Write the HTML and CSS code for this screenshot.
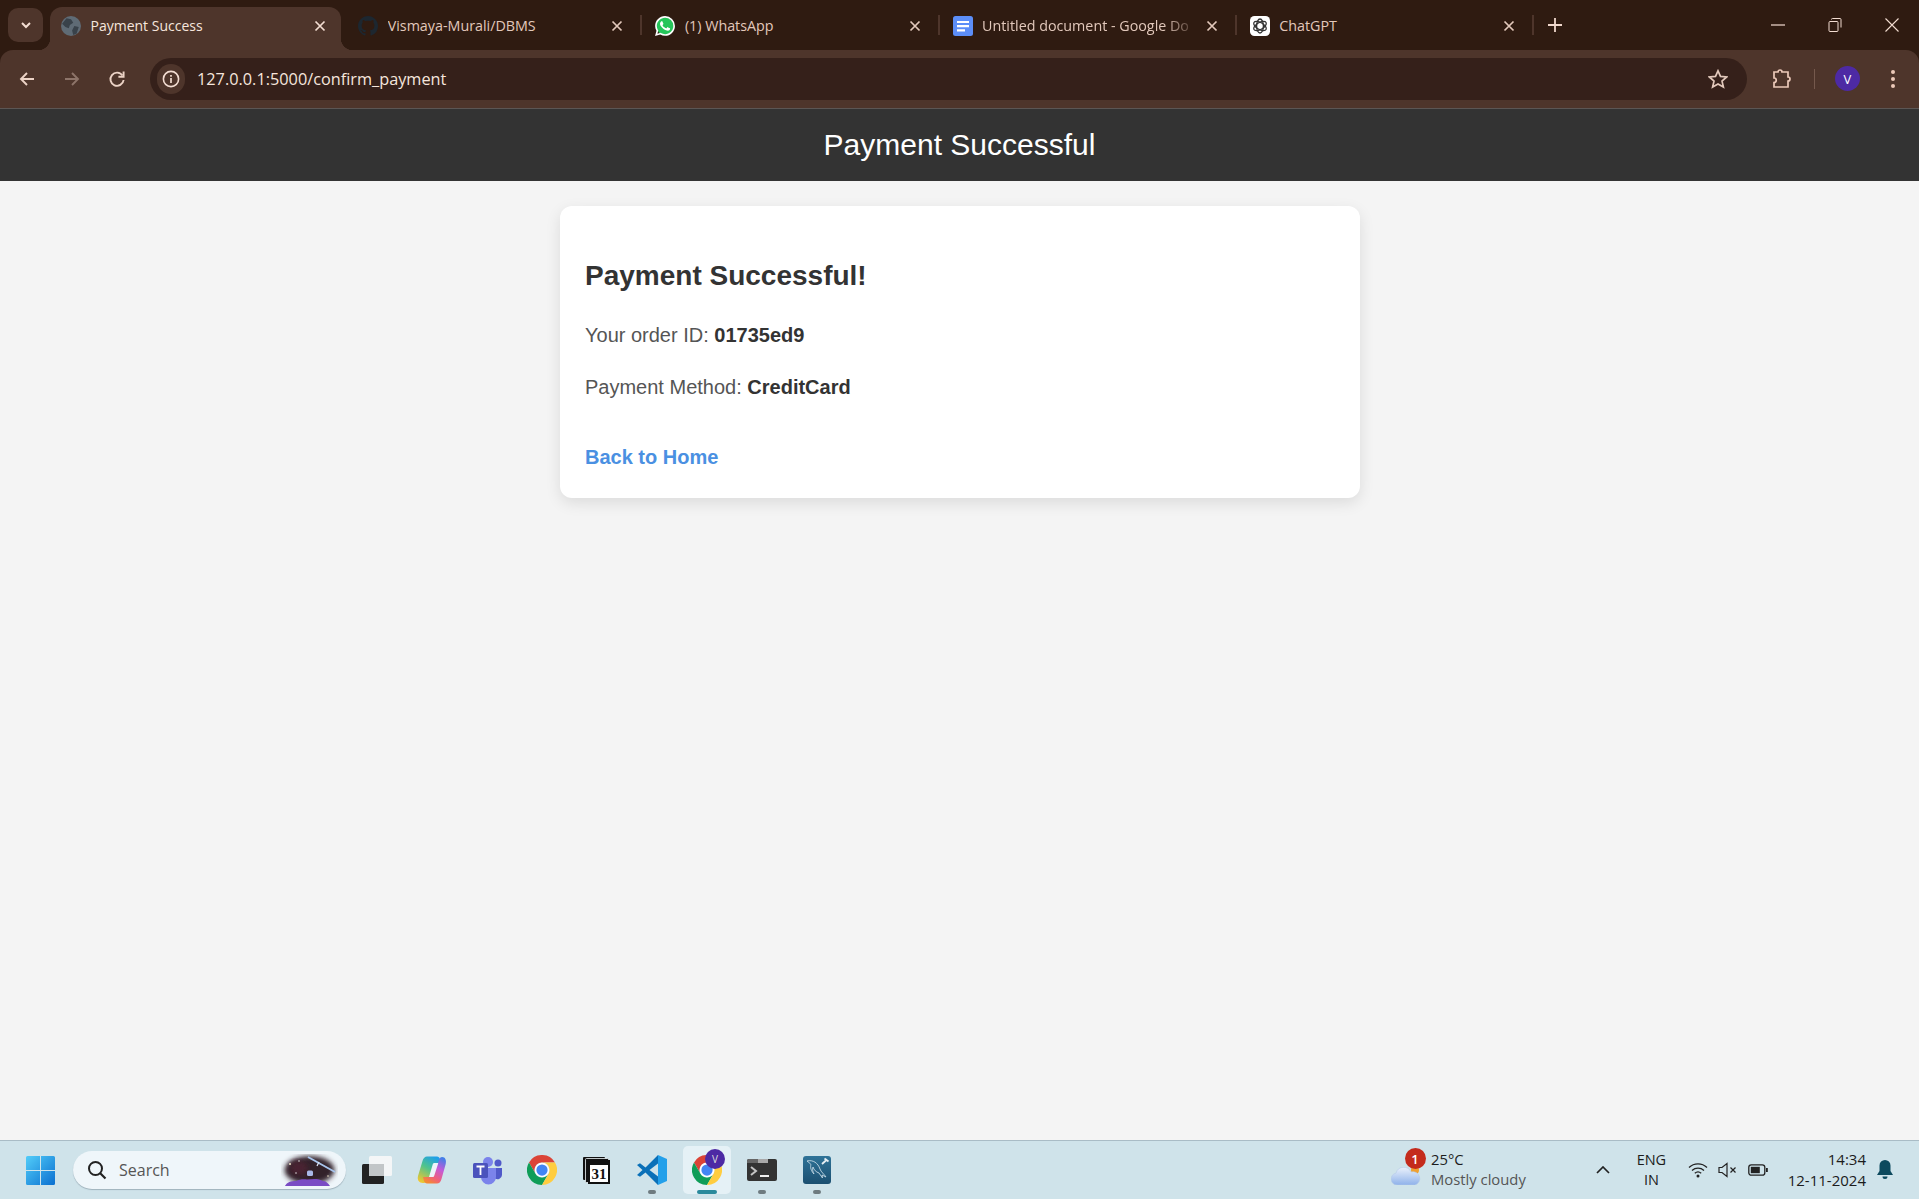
FILE: index.html
```html
<!DOCTYPE html>
<html lang="en">
<head>
    <meta charset="UTF-8">
    <meta name="viewport" content="width=device-width, initial-scale=1.0">
    <title>Payment Success</title>
    <link rel="stylesheet" href="styles.css">
</head>
<body>
    <div class="browser">
        <div class="tabstrip">
            <button class="tab-search">
                <svg width="14" height="14" viewBox="0 0 14 14"><path d="M3 5l4 4 4-4" fill="none" stroke="#f3ddd2" stroke-width="2"/></svg>
            </button>
            <div class="tab active">
                <svg class="favicon" viewBox="0 0 18 18"><circle cx="9" cy="9" r="9" fill="#5f6b75"/><path d="M5 2l4 1 2 3-3 2-1 3-3-1-3-3zM12 9l4 1-2 6-3 1-1-4z" fill="#39424a"/></svg>
                <span class="tab-title">Payment Success</span>
                <svg class="tab-close" viewBox="0 0 12 12"><path d="M1.5 1.5l9 9M10.5 1.5l-9 9" stroke="#f3ddd2" stroke-width="1.7"/></svg>
            </div>
            <div class="tab">
                <svg class="favicon" viewBox="0 0 16 16"><path fill="#1d2730" d="M8 0C3.58 0 0 3.58 0 8c0 3.54 2.29 6.53 5.47 7.59.4.07.55-.17.55-.38 0-.19-.01-.82-.01-1.49-2.01.37-2.53-.49-2.69-.94-.09-.23-.48-.94-.82-1.13-.28-.15-.68-.52-.01-.53.63-.01 1.08.58 1.23.82.72 1.21 1.87.87 2.33.66.07-.52.28-.87.51-1.07-1.78-.2-3.64-.89-3.64-3.95 0-.87.31-1.59.82-2.15-.08-.2-.36-1.02.08-2.12 0 0 .67-.21 2.2.82.64-.18 1.32-.27 2-.27.68 0 1.36.09 2 .27 1.53-1.04 2.2-.82 2.2-.82.44 1.1.16 1.92.08 2.12.51.56.82 1.27.82 2.15 0 3.07-1.87 3.75-3.65 3.95.29.25.54.73.54 1.48 0 1.07-.01 1.93-.01 2.2 0 .21.15.46.55.38A8.013 8.013 0 0016 8c0-4.42-3.58-8-8-8z"/></svg>
                <span class="tab-title">Vismaya-Murali/DBMS</span>
                <svg class="tab-close" viewBox="0 0 12 12"><path d="M1.5 1.5l9 9M10.5 1.5l-9 9" stroke="#e2c8bb" stroke-width="1.7"/></svg>
            </div>
            <i class="tab-sep"></i>
            <div class="tab">
                <svg class="favicon" viewBox="0 0 24 24"><circle cx="12" cy="12" r="10.5" fill="#25c55a"/><path fill="#fff" d="M17.472 14.382c-.297-.149-1.758-.867-2.03-.967-.273-.099-.471-.148-.67.15-.197.297-.767.966-.94 1.164-.173.199-.347.223-.644.075-.297-.15-1.255-.463-2.39-1.475-.883-.788-1.48-1.761-1.653-2.059-.173-.297-.018-.458.13-.606.134-.133.298-.347.446-.52.149-.174.198-.298.298-.497.099-.198.05-.371-.025-.52-.075-.149-.669-1.612-.916-2.207-.242-.579-.487-.5-.669-.51-.173-.008-.371-.01-.57-.01-.198 0-.52.074-.792.372-.272.297-1.04 1.016-1.04 2.479 0 1.462 1.065 2.875 1.213 3.074.149.198 2.096 3.2 5.077 4.487.709.306 1.262.489 1.694.625.712.227 1.36.195 1.871.118.571-.085 1.758-.719 2.006-1.413.248-.694.248-1.289.173-1.413-.074-.124-.272-.198-.57-.347m-5.421 7.403h-.004a9.87 9.87 0 01-5.031-1.378l-.361-.214-3.741.982.998-3.648-.235-.374a9.86 9.86 0 01-1.51-5.26c.001-5.45 4.436-9.884 9.888-9.884 2.64 0 5.122 1.03 6.988 2.898a9.825 9.825 0 012.893 6.994c-.003 5.45-4.437 9.884-9.885 9.884m8.413-18.297A11.815 11.815 0 0012.05 0C5.495 0 .16 5.335.157 11.892c0 2.096.547 4.142 1.588 5.945L.057 24l6.305-1.654a11.882 11.882 0 005.683 1.448h.005c6.554 0 11.89-5.335 11.893-11.893a11.821 11.821 0 00-3.48-8.413z"/></svg>
                <span class="tab-title">(1) WhatsApp</span>
                <svg class="tab-close" viewBox="0 0 12 12"><path d="M1.5 1.5l9 9M10.5 1.5l-9 9" stroke="#e2c8bb" stroke-width="1.7"/></svg>
            </div>
            <i class="tab-sep"></i>
            <div class="tab">
                <svg class="favicon" viewBox="0 0 20 20"><rect width="20" height="20" rx="2.5" fill="#5c8ef8"/><path d="M4 6h12M4 10.200h12M4 14.400h8" stroke="#fff" stroke-width="2.200"/></svg>
                <span class="tab-title fade">Untitled document - Google Do</span>
                <svg class="tab-close" viewBox="0 0 12 12"><path d="M1.5 1.5l9 9M10.5 1.5l-9 9" stroke="#e2c8bb" stroke-width="1.7"/></svg>
            </div>
            <i class="tab-sep"></i>
            <div class="tab">
                <svg class="favicon" viewBox="0 0 20 20"><rect width="20" height="20" rx="4.500" fill="#fff"/><g fill="none" stroke="#333" stroke-width="1.300"><ellipse cx="10" cy="10" rx="3.400" ry="7"/><ellipse cx="10" cy="10" rx="3.400" ry="7" transform="rotate(60 10 10)"/><ellipse cx="10" cy="10" rx="3.400" ry="7" transform="rotate(120 10 10)"/></g></svg>
                <span class="tab-title">ChatGPT</span>
                <svg class="tab-close" viewBox="0 0 12 12"><path d="M1.5 1.5l9 9M10.5 1.5l-9 9" stroke="#e2c8bb" stroke-width="1.7"/></svg>
            </div>
            <i class="tab-sep"></i>
            <svg class="new-tab" viewBox="0 0 14 14"><path d="M7 0v14M0 7h14" stroke="#f0d8cc" stroke-width="1.8"/></svg>
            <div class="window-controls">
                <svg viewBox="0 0 14 14"><path d="M0 7h14" stroke="#f3ddd2" stroke-width="1.2"/></svg>
                <svg viewBox="0 0 14 14"><path d="M1 4.500a1 1 0 0 1 1-1h7a1 1 0 0 1 1 1v8a1 1 0 0 1-1 1H2a1 1 0 0 1-1-1zM3.500 1.500a1 1 0 0 1 1-1h7.500a1 1 0 0 1 1 1v8" fill="none" stroke="#f3ddd2"/></svg>
                <svg viewBox="0 0 14 14"><path d="M.5.5l13 13M13.500.5l-13 13" stroke="#f3ddd2" stroke-width="1.100"/></svg>
            </div>
        </div>

        <div class="toolbar">
            <svg class="tool first" viewBox="0 0 18 18"><path d="M16 9H3M9 3L3 9l6 6" fill="none" stroke="#ecd3c6" stroke-width="1.900"/></svg>
            <svg class="tool" viewBox="0 0 18 18"><path d="M2 9h13M9 3l6 6-6 6" fill="none" stroke="#8d7469" stroke-width="1.900"/></svg>
            <svg class="tool" viewBox="0 0 18 18"><path d="M14.500 5.500A6.600 6.600 0 1 0 15.600 10" fill="none" stroke="#ecd3c6" stroke-width="1.900"/><path d="M15.600 1.500v5.200h-5.200" fill="none" stroke="#ecd3c6" stroke-width="1.900"/></svg>
            <div class="omnibox">
                <span class="site-info">
                    <svg width="18" height="18" viewBox="0 0 18 18"><circle cx="9" cy="9" r="7.600" fill="none" stroke="#f3ddd2" stroke-width="1.600"/><path d="M9 8v5M9 5v1.800" stroke="#f3ddd2" stroke-width="1.700"/></svg>
                </span>
                <span class="url">127.0.0.1:5000/confirm_payment</span>
                <svg class="star" viewBox="0 0 20 20"><path d="M10 1.800l2.500 5.600 6.100.6-4.600 4.100 1.400 6L10 15l-5.400 3.100 1.400-6L1.400 8l6.100-.6z" fill="none" stroke="#e2c8bb" stroke-width="1.700"/></svg>
            </div>
            <svg class="extensions" viewBox="0 0 20 20"><path d="M3 2.500h4a2 2 0 0 1 4 0h6v5a2 2 0 0 1 0 4v6H3v-4.500a2.200 2.200 0 0 0 0-4.500z" transform="translate(0 .5)" fill="none" stroke="#ecc9b9" stroke-width="1.700"/></svg>
            <i class="toolbar-sep"></i>
            <span class="avatar">V</span>
            <svg class="menu-dots" viewBox="0 0 6 20"><circle cx="3" cy="3" r="2" fill="#ecc9b9"/><circle cx="3" cy="10" r="2" fill="#ecc9b9"/><circle cx="3" cy="17" r="2" fill="#ecc9b9"/></svg>
        </div>
    </div>

    <header class="page-header">
        <h1>Payment Successful</h1>
    </header>

    <main class="page-main">
        <div class="card">
            <h2>Payment Successful!</h2>
            <p>Your order ID: <strong>01735ed9</strong></p>
            <p>Payment Method: <strong>CreditCard</strong></p>
            <a class="home-link" href="#">Back to Home</a>
        </div>
    </main>

    <footer class="taskbar">
        <svg class="start" viewBox="0 0 29 29">
            <defs><linearGradient id="win" x1="0" y1="0" x2="1" y2="1"><stop offset="0" stop-color="#52cdf9"/><stop offset="1" stop-color="#0a6fd0"/></linearGradient></defs>
            <path d="M0 1.500A1.500 1.500 0 0 1 1.500 0H14v14H0zM15 0h12.500A1.500 1.500 0 0 1 29 1.500V14H15zM0 15h14v14H1.500A1.500 1.500 0 0 1 0 27.500zM15 15h14v12.500a1.500 1.500 0 0 1-1.500 1.500H15z" fill="url(#win)"/>
        </svg>
        <div class="search">
            <svg width="20" height="20" viewBox="0 0 20 20"><circle cx="8.500" cy="8.500" r="6.500" fill="none" stroke="#222" stroke-width="2"/><path d="M13 13l5.500 5.500" stroke="#222" stroke-width="2.200"/></svg>
            <span class="search-label">Search</span>
            <svg class="search-art" viewBox="0 0 57 32">
                <defs>
                    <filter id="soft" x="-20%" y="-20%" width="140%" height="140%"><feGaussianBlur stdDeviation="2.500"/></filter>
                    <clipPath id="artclip"><rect width="57" height="32"/></clipPath>
                </defs>
                <g clip-path="url(#artclip)">
                    <ellipse cx="28.500" cy="16" rx="25" ry="14" fill="#33202a" filter="url(#soft)"/>
                    <ellipse cx="18" cy="14" rx="9" ry="7" fill="#4a2230" filter="url(#soft)"/>
                    <path d="M27 3l27 15" stroke="#a8c4ec" stroke-width="2"/>
                    <path d="M38 8l-2 4" stroke="#dbe6f7" stroke-width="1.200"/>
                    <rect x="26" y="16.500" width="6" height="5.500" rx="1.500" fill="#a9b9e8"/>
                    <circle cx="9" cy="10" r="1" fill="#f0e6c8"/>
                    <circle cx="18" cy="7" r=".7" fill="#fff"/>
                    <circle cx="47" cy="22" r=".8" fill="#f0e6c8"/>
                    <circle cx="15" cy="19" r=".7" fill="#fff"/>
                    <path d="M4 32c2-4 6-5 11-5 3-1.500 7-2 11-1.500 6-1 13-1 16 1.500 3 0 5 2 7 5z" fill="#7a4cc4"/>
                </g>
            </svg>
        </div>
        <div class="task-icons">
            <span class="task">
                <svg viewBox="0 0 30 28"><rect x="7" y="0" width="23" height="20" rx="1.500" fill="#f4f6f7"/><rect y="8" width="22" height="20" rx="1.500" fill="#222"/><rect x="7" y="8" width="15" height="12" fill="#c2c6c8"/></svg>
            </span>
            <span class="task">
                <svg viewBox="0 0 30 30">
                    <defs>
                        <linearGradient id="cop1" x1="0.700" y1="0" x2="0.200" y2="1"><stop offset="0" stop-color="#1f9fe8"/><stop offset=".45" stop-color="#4fc48c"/><stop offset="1" stop-color="#f4c72e"/></linearGradient>
                        <linearGradient id="cop2" x1="0.800" y1="0" x2="0.300" y2="1"><stop offset="0" stop-color="#3f7fe8"/><stop offset=".4" stop-color="#c45ad8"/><stop offset=".75" stop-color="#f0607a"/><stop offset="1" stop-color="#f58a32"/></linearGradient>
                    </defs>
                    <path d="M12 8h10l-4 14H8z" fill="#eef3fa"/>
                    <path d="M10 1.500H20c1.500 0 2.500 1 3 2.500l1 4H17.500c-1 0-1.500.5-1.800 1.500L12 22c-1 3.500-3 6-6 6C2 28 0 25 1 21L5.500 6C6.300 3 8 1.500 10 1.500z" fill="url(#cop1)"/>
                    <path d="M20 28.500H10c-1.500 0-2.500-1-3-2.500l-1-4h9.500c1 0 1.500-.5 1.800-1.500L21 9c.8-3.500 1.500-7 4-7 3.500 0 4.500 3.500 3.700 7L24.500 24c-.8 3-2.500 4.500-4.500 4.500z" fill="url(#cop2)"/>
                </svg>
            </span>
            <span class="task">
                <svg viewBox="0 0 30 30"><circle cx="16" cy="7" r="5" fill="#7b83eb"/><circle cx="26" cy="8" r="3.500" fill="#5059c9"/><path d="M23 13h7v7a4.500 4.500 0 0 1-7 3.500z" fill="#5059c9"/><path d="M9 13h15v9a7.500 7.500 0 0 1-15 0z" fill="#7b83eb"/><rect x="1" y="8" width="15" height="15" rx="1.500" fill="#4b53bc"/><path d="M4.500 11.500h8M8.500 11.500V20" stroke="#fff" stroke-width="1.800"/></svg>
            </span>
            <span class="task">
                <svg viewBox="0 0 48 48"><path fill="#db4437" d="M24 12h20.800A24 24 0 0 0 3.200 12l10.400 18A12 12 0 0 1 24 12z"/><path fill="#0f9d58" d="M13.600 30L3.200 12A24 24 0 0 0 24 48l10.400-18a12 12 0 0 1-20.800 0z"/><path fill="#ffcd40" d="M34.400 30L24 48a24 24 0 0 0 20.800-36H24a12 12 0 0 1 10.400 18z"/><circle cx="24" cy="24" r="11.500" fill="#fff"/><circle cx="24" cy="24" r="9" fill="#4285f4"/></svg>
            </span>
            <span class="task">
                <svg viewBox="0 0 30 30"><rect x="1" y="2" width="22" height="23" rx="1" fill="#111"/><rect x="3.500" y="3.500" width="23" height="24" rx="1" fill="#111" stroke="#eef5f8" stroke-width=".8"/><rect x="6" y="5" width="22" height="24" fill="#111"/><rect x="8" y="10" width="18" height="17" fill="#fff"/><text class="cal-date" x="17" y="24">31</text></svg>
            </span>
            <span class="task has-pip">
                <svg viewBox="0 0 30 30"><path d="M21 0l9 4v22l-9 4z" fill="#23a0ea"/><path d="M21 0L8.500 12.500 3 8.200 0 10l5.500 5L0 20l3 1.800 5.500-4.300L21 30V21.500L12.500 15 21 8.500z" fill="#0a70b8"/></svg>
            </span>
            <span class="task active-task">
                <svg viewBox="0 0 48 48"><path fill="#db4437" d="M24 12h20.800A24 24 0 0 0 3.200 12l10.400 18A12 12 0 0 1 24 12z"/><path fill="#0f9d58" d="M13.600 30L3.200 12A24 24 0 0 0 24 48l10.400-18a12 12 0 0 1-20.800 0z"/><path fill="#ffcd40" d="M34.400 30L24 48a24 24 0 0 0 20.800-36H24a12 12 0 0 1 10.400 18z"/><circle cx="24" cy="24" r="11.500" fill="#fff"/><circle cx="24" cy="24" r="9" fill="#4285f4"/></svg>
                <span class="task-badge">V</span>
            </span>
            <span class="task has-pip">
                <svg class="terminal" viewBox="0 0 30 22"><rect width="30" height="22" rx="2" fill="#333"/><path d="M0 2a2 2 0 0 1 2-2h9v4H0z" fill="#666"/><rect x="11" width="10" height="4" fill="#a9a9a9"/><path d="M4 8l5 4-5 4" fill="none" stroke="#c4c4c4" stroke-width="2"/><path d="M13 17h9" stroke="#eee" stroke-width="2"/></svg>
            </span>
            <span class="task has-pip">
                <svg viewBox="0 0 30 30"><defs><linearGradient id="wb" x1="0" y1="0" x2="0" y2="1"><stop offset="0" stop-color="#2f7398"/><stop offset="1" stop-color="#1b4f70"/></linearGradient></defs><rect x="1" y="1" width="28" height="28" rx="3" fill="url(#wb)"/><path d="M5 6c6-1.500 11 2 13 8 1 3 4 5 6 8l-4-2 .5 3-3.500-5c-3-1-5-3-6-6-1 3 0 5 1 7-3-3-4-7-3-9.500C8 8 6 7 5 6z" fill="none" stroke="#c3d8e4" stroke-width=".9"/><path d="M20 9l5-4.500M22.500 3.500l4 3" stroke="#e6eff4" stroke-width="1.800"/></svg>
            </span>
        </div>

        <div class="weather">
            <span class="weather-icon">
                <svg viewBox="0 0 30 18"><defs><linearGradient id="cl" x1="0" y1="0" x2="0" y2="1"><stop offset="0" stop-color="#eaf1fb"/><stop offset="1" stop-color="#8fb2ea"/></linearGradient></defs><circle cx="24" cy="3" r="4" fill="#f0a030"/><path d="M6 18a6 6 0 0 1-1-11.900A8 8 0 0 1 20 5a6.500 6.500 0 0 1 4 13z" fill="url(#cl)" stroke="#b5cbe8" stroke-width=".6"/></svg>
                <span class="weather-badge">1</span>
            </span>
            <span class="weather-text">
                <span>25°C</span>
                <span class="muted">Mostly cloudy</span>
            </span>
        </div>
        <svg class="tray-chevron" viewBox="0 0 14 8"><path d="M1 7l6-6 6 6" fill="none" stroke="#222" stroke-width="1.700"/></svg>
        <span class="lang">ENG<br>IN</span>
        <div class="tray-icons">
            <svg viewBox="0 0 20 16"><path d="M1 5.500a13 13 0 0 1 18 0M4 8.500a9 9 0 0 1 12 0M6.800 11.200a5 5 0 0 1 6.400 0" fill="none" stroke="#222" stroke-width="1.300"/><circle cx="10" cy="14" r="1.500" fill="#222"/></svg>
            <svg viewBox="0 0 20 16"><path d="M1 5.500h3L9 1.500v13l-5-4H1z" fill="none" stroke="#222" stroke-width="1.200"/><path d="M12.500 5.500l5 5M17.500 5.500l-5 5" stroke="#222" stroke-width="1.200"/></svg>
            <svg viewBox="0 0 20 16"><rect x=".8" y="2.800" width="16" height="10.400" rx="2.500" fill="none" stroke="#222" stroke-width="1.300"/><rect x="2.800" y="4.800" width="9" height="6.400" fill="#222"/><rect x="18" y="6" width="1.800" height="4" fill="#222"/></svg>
        </div>
        <span class="clock">14:34<br>12-11-2024</span>
        <svg class="bell" viewBox="0 0 16 20"><path d="M8 0a5.500 5.500 0 0 1 5.500 5.500V11l2.500 4H0l2.500-4V5.500A5.500 5.500 0 0 1 8 0zM5.500 16.500h5a2.500 2.500 0 0 1-5 0z" fill="#0d4a5e"/></svg>
    </footer>
</body>
</html>
```

FILE: styles.css
```css
* {
    box-sizing: border-box;
}
html, body {
    height: 100%;
}
body {
    margin: 0;
    display: flex;
    flex-direction: column;
    background-color: #f4f4f4;
    font-family: "Liberation Sans", Arial, sans-serif;
    overflow: hidden;
}

/* browser chrome */
.browser {
    flex: none;
    background-color: #2f1b11;
}
.tabstrip {
    height: 50px;
    display: flex;
    align-items: flex-end;
    font-family: "Open Sans", "Noto Sans", sans-serif;
}
.tab-search {
    width: 35px;
    height: 34px;
    margin: 0 7px 8px 8px;
    padding: 0;
    display: flex;
    align-items: center;
    justify-content: center;
    border: none;
    border-radius: 10px;
    background-color: #4e352b;
}
.tab {
    position: relative;
    width: 291.2px;
    height: 43px;
    flex: none;
    display: flex;
    align-items: center;
    padding: 0 15px 6px 11px;
    border-radius: 12px 12px 0 0;
    font-size: 14.3px;
    color: #e2c8bb;
}
.tab.active {
    background-color: #4e352b;
    color: #f6e6dd;
}
.tab.active .tab-title {
    font-size: 14px;
}
.tab.active::before,
.tab.active::after {
    content: "";
    position: absolute;
    bottom: 0;
    width: 12px;
    height: 12px;
}
.tab.active::before {
    left: -12px;
    background: radial-gradient(circle at 0 0, transparent 12px, #4e352b 12.5px);
}
.tab.active::after {
    right: -12px;
    background: radial-gradient(circle at 100% 0, transparent 12px, #4e352b 12.5px);
}
.tab + .tab {
    margin-left: 6px;
}
.favicon {
    width: 20px;
    height: 20px;
    flex: none;
}
.tab-title {
    margin-left: 9.5px;
    flex: 1;
    white-space: nowrap;
    overflow: hidden;
}
.tab-title.fade {
    -webkit-mask-image: linear-gradient(to right, #000 84%, transparent 100%);
    mask-image: linear-gradient(to right, #000 84%, transparent 100%);
}
.tab-close {
    width: 12px;
    height: 12px;
    flex: none;
    margin-left: 8px;
}
.tab-sep {
    width: 2px;
    height: 20px;
    flex: none;
    margin: 0 2px 15px;
    background-color: #4e352b;
}
.new-tab {
    width: 14px;
    height: 14px;
    flex: none;
    margin: 0 0 18px 12px;
}
.window-controls {
    margin: 0 20px 18px auto;
    display: flex;
    gap: 43px;
}
.window-controls svg {
    width: 14px;
    height: 14px;
}

.toolbar {
    height: 59px;
    display: flex;
    align-items: center;
    padding: 0 18px 1px 18px;
    background-color: #4e352b;
    border-bottom: 1px solid #5c5654;
    border-radius: 13px 13px 0 0;
}
.tool {
    width: 18px;
    height: 18px;
    flex: none;
    margin-right: 27px;
}
.omnibox {
    width: 1597px;
    height: 42px;
    margin-left: -3px;
    flex: none;
    display: flex;
    align-items: center;
    padding: 0 19px 0 7px;
    border-radius: 21px;
    background-color: #35201a;
}
.site-info {
    width: 28px;
    height: 30px;
    display: flex;
    align-items: center;
    justify-content: center;
    border-radius: 15px;
    background-color: #4e352b;
}
.url {
    margin-left: 12px;
    padding-top: 1px;
    flex: 1;
    font-family: "Open Sans", "Noto Sans", sans-serif;
    font-size: 16.3px;
    color: #f6e6dd;
}
.star {
    width: 20px;
    height: 20px;
}
.extensions {
    width: 20px;
    height: 20px;
    flex: none;
    margin-left: 24px;
}
.toolbar-sep {
    width: 1px;
    height: 20px;
    flex: none;
    margin-left: 23px;
    background-color: #75594d;
}
.avatar {
    width: 25px;
    height: 25px;
    flex: none;
    margin-left: 20px;
    display: flex;
    align-items: center;
    justify-content: center;
    border-radius: 50%;
    background-color: #4d2aa4;
    color: #fff;
    font-family: "Open Sans", sans-serif;
    font-size: 13px;
}
.menu-dots {
    width: 6px;
    height: 20px;
    flex: none;
    margin-left: 30px;
}

/* page */
.page-header {
    height: 72px;
    flex: none;
    display: flex;
    align-items: center;
    justify-content: center;
    background-color: #333;
}
.page-header h1 {
    margin: 0;
    font-size: 30px;
    font-weight: 400;
    color: #fff;
}
.page-main {
    flex: 1;
    min-height: 0;
}
.card {
    width: 800px;
    margin: 25px auto 0;
    padding: 25px 25.5px 29px;
    background-color: #fff;
    border-radius: 12px;
    box-shadow: 0 5px 15px rgba(0, 0, 0, 0.1);
    color: #555;
}
.card h2 {
    margin: 29px 0 0;
    font-size: 28px;
    line-height: 32px;
    color: #333;
}
.card p {
    margin: 29px 0 0;
    font-size: 20px;
    line-height: 23px;
}
.card h2 + p {
    margin-top: 32px;
}
.card strong {
    color: #333;
}
.home-link {
    display: block;
    margin-top: 47px;
    font-size: 20px;
    line-height: 23px;
    font-weight: 700;
    color: #4a90e2;
    text-decoration: none;
}

/* windows taskbar */
.taskbar {
    height: 59px;
    flex: none;
    display: flex;
    align-items: center;
    padding-left: 26px;
    background-color: #cfe3ea;
    border-top: 1px solid #a9bcc6;
    font-family: "Open Sans", "Noto Sans", sans-serif;
    color: #1c1c1c;
}
.start {
    width: 29px;
    height: 29px;
    flex: none;
}
.search {
    width: 273px;
    height: 38px;
    flex: none;
    margin-left: 18px;
    display: flex;
    align-items: center;
    padding: 0 8px 0 14px;
    border-radius: 19px;
    background-color: #eff6fa;
    box-shadow: 0 1px 1px #9fb2bc;
}
.search-label {
    margin-left: 12px;
    flex: 1;
    font-size: 16px;
    color: #555;
}
.search-art {
    width: 57px;
    height: 32px;
}
.task-icons {
    display: flex;
    margin-left: 3.5px;
}
.task {
    position: relative;
    width: 55px;
    height: 48px;
    display: flex;
    align-items: center;
    justify-content: center;
}
.task svg {
    width: 30px;
    height: 30px;
}
.task svg.terminal {
    height: 22px;
}
.has-pip::after {
    content: "";
    position: absolute;
    left: 23.5px;
    bottom: 0;
    width: 8px;
    height: 4px;
    border-radius: 2px;
    background-color: #6e7b80;
}
.active-task::before {
    content: "";
    position: absolute;
    top: 0;
    bottom: 0;
    left: 3.5px;
    width: 48px;
    border-radius: 5px;
    background-color: #e5f1f6;
}
.active-task svg {
    position: relative;
}
.active-task::after {
    content: "";
    position: absolute;
    left: 17.5px;
    bottom: 0;
    width: 20px;
    height: 4px;
    border-radius: 2px;
    background-color: #2a8a9c;
}
.task-badge {
    position: absolute;
    top: 3px;
    left: 25.5px;
    width: 20px;
    height: 20px;
    display: flex;
    align-items: center;
    justify-content: center;
    border-radius: 50%;
    background-color: #4d2aa4;
    color: #ddd;
    font-size: 10px;
}
.cal-date {
    font-family: "Liberation Serif", serif;
    font-size: 15px;
    font-weight: 700;
    text-anchor: middle;
    fill: #111;
}

.weather {
    margin-left: auto;
    display: flex;
    align-items: center;
}
.weather-icon {
    position: relative;
    width: 30px;
    height: 18px;
    margin-top: 12px;
}
.weather-icon svg {
    width: 30px;
    height: 18px;
    display: block;
}
.weather-badge {
    position: absolute;
    top: -19px;
    left: 13.5px;
    width: 21px;
    height: 21px;
    display: flex;
    align-items: center;
    justify-content: center;
    border-radius: 50%;
    background-color: #c42b1c;
    color: #fff;
    font-size: 13px;
    font-weight: 600;
}
.weather-text {
    margin-left: 10px;
    width: 165.4px;
    display: flex;
    flex-direction: column;
    margin-top: -2px;
    font-size: 14.8px;
    line-height: 20px;
}
.muted {
    color: #555;
}
.tray-chevron {
    width: 14px;
    height: 8px;
    flex: none;
}
.lang {
    width: 40px;
    margin-left: 21px;
    text-align: center;
    font-size: 14.5px;
    line-height: 20px;
}
.tray-icons {
    margin-left: 17px;
    display: flex;
    gap: 10px;
}
.tray-icons svg {
    width: 20px;
    height: 16px;
}
.clock {
    margin-left: 15.6px;
    width: 82px;
    text-align: right;
    font-size: 15px;
    line-height: 21px;
}
.bell {
    width: 16px;
    height: 20px;
    flex: none;
    margin: 0 26px 0 11px;
}
```
